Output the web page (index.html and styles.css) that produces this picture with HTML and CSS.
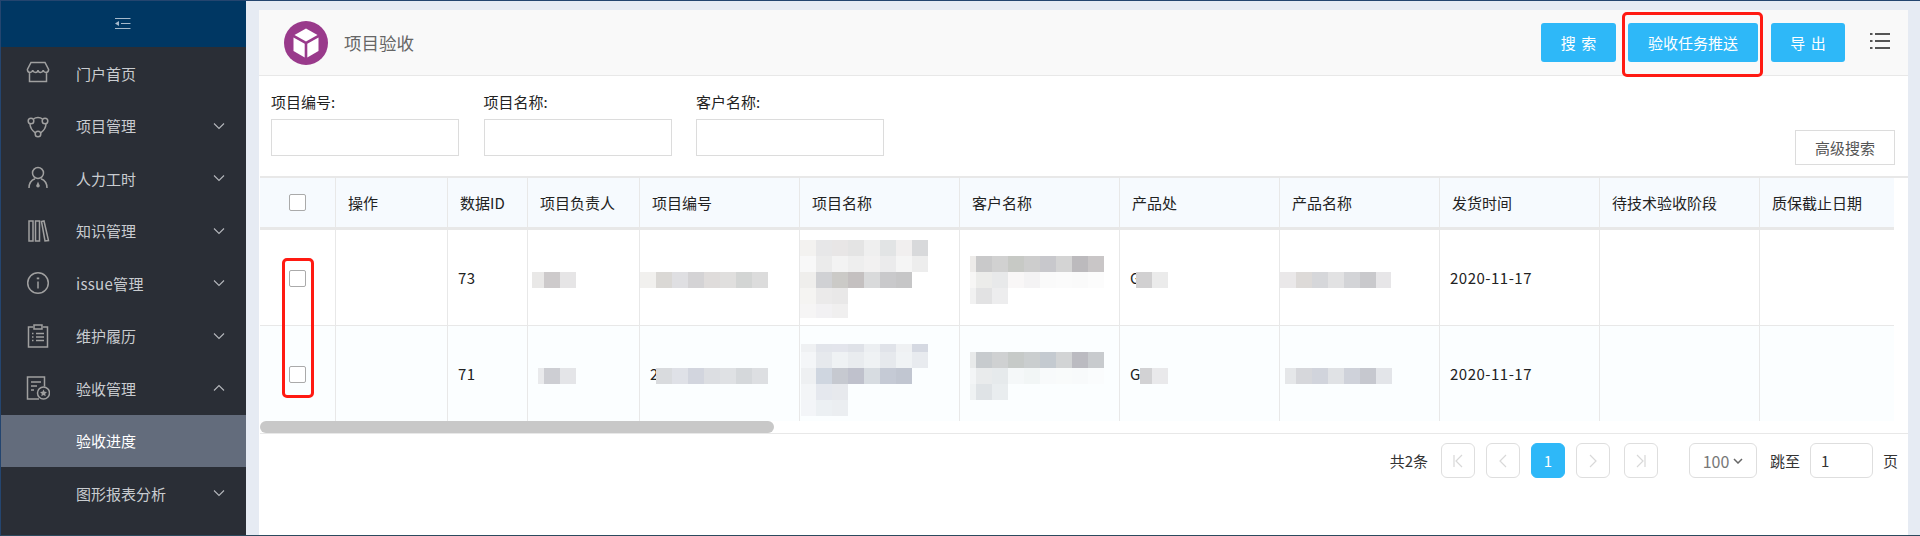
FILE: index.html
```html
<!DOCTYPE html>
<html>
<head>
    <meta charset="utf-8">
    <title>项目验收</title>
    <link rel="stylesheet" href="styles.css">
</head>
<body>
    <div class="app">
        <aside class="sidebar">
            <div class="sidebar-top">
                <svg width="16" height="12" viewBox="0 0 16 12"><path d="M0 .5h15.5M6 5.5h9.5M0 10.5h15.5" stroke="#a6b9cb" fill="none"/><path d="M0 5.500 4 3v5z" fill="#a6b9cb"/></svg>
            </div>
            <ul class="menu">
                <li class="menu-item">
                    <svg class="menu-icon" viewBox="0 0 24 24"><path d="M5 1.500h14l3.600 7c0 1.800-1.200 2.900-2.600 2.900s-2.600-1-2.800-2.400c-.2 1.400-1.300 2.400-2.700 2.400s-2.500-1-2.500-2.400c0 1.400-1.100 2.400-2.500 2.400S6.900 10.400 6.700 9C6.500 10.400 5.400 11.400 4 11.400s-2.600-1.100-2.600-2.900zM3.500 12v8.500h17V12"/></svg>
                    <span>门户首页</span>
                </li>
                <li class="menu-item">
                    <svg class="menu-icon" viewBox="0 0 24 24"><circle cx="5" cy="7" r="2.800"/><circle cx="19" cy="7" r="2.800"/><circle cx="12" cy="20" r="2.800"/><path d="M7.500 5C10 3 14 3 16.500 5M4 10c.2 3.500 2 6.500 5.300 8.800M20 10c-.2 3.500-2 6.500-5.300 8.800"/></svg>
                    <span>项目管理</span>
                    <svg class="chevron" viewBox="0 0 12 8"><path d="M1 1.500 6 6.500l5-5"/></svg>
                </li>
                <li class="menu-item">
                    <svg class="menu-icon" viewBox="0 0 24 24"><circle cx="12" cy="7" r="5.500"/><path d="M3 22c0-5 2.500-8 6-9.300M21 22c0-5-2.500-8-6-9.300"/><path class="solid" d="M12 15.500l1.800 4.200a1.800 1.800 0 0 1-3.600 0z"/></svg>
                    <span>人力工时</span>
                    <svg class="chevron" viewBox="0 0 12 8"><path d="M1 1.500 6 6.500l5-5"/></svg>
                </li>
                <li class="menu-item">
                    <svg class="menu-icon" viewBox="0 0 24 24"><path d="M3 2h4v20H3zM9.500 2h4v20h-4zM15.500 2.500 18 2l4.500 19.500-3.500.5z"/></svg>
                    <span>知识管理</span>
                    <svg class="chevron" viewBox="0 0 12 8"><path d="M1 1.500 6 6.500l5-5"/></svg>
                </li>
                <li class="menu-item">
                    <svg class="menu-icon" viewBox="0 0 24 24"><circle cx="12" cy="12" r="10.300"/><path d="M12 10.500v7"/><path class="thick" d="M12 6.500v1.800"/></svg>
                    <span class="latin">issue管理</span>
                    <svg class="chevron" viewBox="0 0 12 8"><path d="M1 1.500 6 6.500l5-5"/></svg>
                </li>
                <li class="menu-item">
                    <svg class="menu-icon" viewBox="0 0 24 24"><path d="M7 3H2.500v20h19V3H17"/><path d="M8 1h8v4H8z"/><path d="M6 9.500h1.500M10 9.500h8M6 13h1.500M10 13h8M6 16.500h1.500M10 16.500h8"/></svg>
                    <span>维护履历</span>
                    <svg class="chevron" viewBox="0 0 12 8"><path d="M1 1.500 6 6.500l5-5"/></svg>
                </li>
                <li class="menu-item">
                    <svg class="menu-icon" viewBox="0 0 24 24"><path d="M13 23H1.500V1h17v9.500"/><path d="M5 6h10M5 10h6M5 14h3"/><circle cx="17.500" cy="17" r="6"/><path class="solid" d="m17.500 13.500 1.100 2.300 2.400.3-1.800 1.700.5 2.400-2.200-1.200-2.200 1.200.5-2.400-1.800-1.700 2.400-.3z"/></svg>
                    <span>验收管理</span>
                    <svg class="chevron" viewBox="0 0 12 8"><path d="M1 6.500 6 1.500l5 5"/></svg>
                </li>
                <li class="menu-item menu-sub active"><span>验收进度</span></li>
                <li class="menu-item menu-sub">
                    <span>图形报表分析</span>
                    <svg class="chevron" viewBox="0 0 12 8"><path d="M1 1.500 6 6.500l5-5"/></svg>
                </li>
            </ul>
        </aside>

        <main class="content">
            <div class="card">
                <header class="card-head">
                    <svg class="logo" viewBox="0 0 44 44"><circle cx="22" cy="22" r="22" fill="#993a8b"/><path d="M22 7.500 33.500 14 22 20.500 10.500 14z" fill="#fff"/><path d="M9.500 16.500 20.700 22.800V36.500L9.500 30z" fill="#fff"/><path d="M34.500 16.500 23.300 22.800V36.500L34.500 30z" fill="#fff"/></svg>
                    <h1 class="title">项目验收</h1>
                    <div class="actions">
                        <button class="btn btn-search">搜 索</button>
                        <button class="btn btn-push">验收任务推送</button>
                        <button class="btn btn-export">导 出</button>
                        <svg class="list-icon" width="20" height="18" viewBox="0 0 20 18"><path d="M0 2h2.500M5 2h15M0 9h2.500M5 9h15M0 16h2.500M5 16h15" stroke="#555" stroke-width="2" fill="none"/></svg>
                    </div>
                </header>

                <form class="filters">
                    <div class="field"><label>项目编号:</label><input type="text"></div>
                    <div class="field"><label>项目名称:</label><input type="text"></div>
                    <div class="field"><label>客户名称:</label><input type="text"></div>
                    <button type="button" class="btn-advanced">高级搜索</button>
                </form>

                <div class="table-wrap">
                    <table class="grid">
                        <colgroup>
                            <col width="76"><col width="112"><col width="80"><col width="112"><col width="160"><col width="160"><col width="160"><col width="160"><col width="160"><col width="160"><col width="160"><col width="134">
                        </colgroup>
                        <thead>
                            <tr>
                                <th class="check"><input type="checkbox"></th>
                                <th>操作</th>
                                <th>数据ID</th>
                                <th>项目负责人</th>
                                <th>项目编号</th>
                                <th>项目名称</th>
                                <th>客户名称</th>
                                <th>产品处</th>
                                <th>产品名称</th>
                                <th>发货时间</th>
                                <th>待技术验收阶段</th>
                                <th class="last">质保截止日期</th>
                            </tr>
                        </thead>
                        <tbody>
                            <tr>
                                <td class="check"><input type="checkbox"></td>
                                <td></td><td>73</td><td></td><td></td><td></td><td></td><td>G</td><td></td><td>2020-11-17</td><td></td><td class="last"></td>
                            </tr>
                            <tr class="alt">
                                <td class="check"><input type="checkbox"></td>
                                <td></td><td>71</td><td></td><td>2</td><td></td><td></td><td>G</td><td></td><td>2020-11-17</td><td></td><td class="last"></td>
                            </tr>
                        </tbody>
                    </table>

                    <!-- pixelated redactions, drawn in page coordinates -->
                    <svg class="redact" width="1634" height="243" viewBox="260 178 1634 243" shape-rendering="crispEdges">
                        <!-- owner -->
                        <rect x="532" y="272" width="12" height="16" fill="#e9e8e7"/><rect x="544" y="272" width="16" height="16" fill="#cdcacb"/><rect x="560" y="272" width="16" height="16" fill="#e6e5e6"/>
                        <rect x="538" y="368" width="6" height="16" fill="#e9eaec"/><rect x="544" y="368" width="16" height="16" fill="#cdced3"/><rect x="560" y="368" width="16" height="16" fill="#e4e5e8"/>
                        <!-- project number -->
                        <rect x="640" y="267" width="16" height="36" fill="#fff"/>
                        <rect x="640" y="272" width="16" height="16" fill="#f1f0ee"/><rect x="656" y="272" width="16" height="16" fill="#dad8d5"/><rect x="672" y="272" width="16" height="16" fill="#dfdfe2"/><rect x="688" y="272" width="16" height="16" fill="#d4d3d5"/><rect x="704" y="272" width="16" height="16" fill="#dfdcdb"/><rect x="720" y="272" width="16" height="16" fill="#e0dfde"/><rect x="736" y="272" width="16" height="16" fill="#d3d5d4"/><rect x="752" y="272" width="16" height="16" fill="#dcdcdc"/>
                        <rect x="656" y="368" width="16" height="16" fill="#d9dbde"/><rect x="672" y="368" width="16" height="16" fill="#dfe1e7"/><rect x="688" y="368" width="16" height="16" fill="#d2d5de"/><rect x="704" y="368" width="16" height="16" fill="#dcdee2"/><rect x="720" y="368" width="16" height="16" fill="#dfe1e4"/><rect x="736" y="368" width="16" height="16" fill="#d5d8db"/><rect x="752" y="368" width="16" height="16" fill="#dddfe2"/>
                        <!-- project name, row 1 -->
                        <rect x="800" y="240" width="16" height="16" fill="#f3f2f0"/><rect x="816" y="240" width="16" height="16" fill="#e7e7e8"/><rect x="832" y="240" width="16" height="16" fill="#e8e6e6"/><rect x="848" y="240" width="16" height="16" fill="#e4e4e4"/><rect x="864" y="240" width="16" height="16" fill="#efefef"/><rect x="880" y="240" width="16" height="16" fill="#e2e4e5"/><rect x="896" y="240" width="16" height="16" fill="#f1efef"/><rect x="912" y="240" width="16" height="16" fill="#d8d9db"/>
                        <rect x="800" y="256" width="16" height="16" fill="#f8f8f8"/><rect x="816" y="256" width="16" height="16" fill="#ebebeb"/><rect x="832" y="256" width="16" height="16" fill="#f3f3f3"/><rect x="848" y="256" width="16" height="16" fill="#eeeeee"/><rect x="864" y="256" width="16" height="16" fill="#f2f1f1"/><rect x="880" y="256" width="16" height="16" fill="#ebebec"/><rect x="896" y="256" width="16" height="16" fill="#f5f5f5"/><rect x="912" y="256" width="16" height="16" fill="#ededed"/>
                        <rect x="800" y="272" width="16" height="16" fill="#efeeec"/><rect x="816" y="272" width="16" height="16" fill="#d0d1d4"/><rect x="832" y="272" width="16" height="16" fill="#cbcac7"/><rect x="848" y="272" width="16" height="16" fill="#c4c0c0"/><rect x="864" y="272" width="16" height="16" fill="#d9dadb"/><rect x="880" y="272" width="16" height="16" fill="#c9c9cb"/><rect x="896" y="272" width="16" height="16" fill="#c6c6c7"/>
                        <rect x="800" y="288" width="16" height="16" fill="#f5f4f2"/><rect x="816" y="288" width="16" height="16" fill="#ebeaea"/><rect x="832" y="288" width="16" height="16" fill="#e9e8e8"/>
                        <rect x="800" y="304" width="16" height="14" fill="#f6f5f5"/><rect x="816" y="304" width="16" height="14" fill="#f2f1f3"/><rect x="832" y="304" width="16" height="14" fill="#f0efef"/>
                        <!-- project name, row 2 -->
                        <rect x="801" y="344" width="15" height="8" fill="#eff1f3"/><rect x="816" y="344" width="16" height="8" fill="#e2e5eb"/><rect x="832" y="344" width="16" height="8" fill="#e3e5ec"/><rect x="848" y="344" width="16" height="8" fill="#dfe2e8"/><rect x="864" y="344" width="16" height="8" fill="#eceff2"/><rect x="880" y="344" width="16" height="8" fill="#e0e3e9"/><rect x="896" y="344" width="16" height="8" fill="#eff1f3"/><rect x="912" y="344" width="16" height="8" fill="#d5d9e2"/>
                        <rect x="801" y="352" width="15" height="16" fill="#f4f6f8"/><rect x="816" y="352" width="16" height="16" fill="#e6e9ed"/><rect x="832" y="352" width="16" height="16" fill="#eff2f4"/><rect x="848" y="352" width="16" height="16" fill="#e9ecef"/><rect x="864" y="352" width="16" height="16" fill="#eff2f4"/><rect x="880" y="352" width="16" height="16" fill="#e6e9ed"/><rect x="896" y="352" width="16" height="16" fill="#f0f3f5"/><rect x="912" y="352" width="16" height="16" fill="#e8ebef"/>
                        <rect x="801" y="368" width="15" height="16" fill="#eef0f2"/><rect x="816" y="368" width="16" height="16" fill="#cfd6e0"/><rect x="832" y="368" width="16" height="16" fill="#c6c9d0"/><rect x="848" y="368" width="16" height="16" fill="#bfc1cc"/><rect x="864" y="368" width="16" height="16" fill="#d7dce1"/><rect x="880" y="368" width="16" height="16" fill="#c5cad5"/><rect x="896" y="368" width="16" height="16" fill="#c1c6d1"/>
                        <rect x="801" y="384" width="15" height="16" fill="#f3f5f7"/><rect x="816" y="384" width="16" height="16" fill="#e5e8ee"/><rect x="832" y="384" width="16" height="16" fill="#e7e9ed"/>
                        <rect x="801" y="400" width="15" height="16" fill="#f3f5f8"/><rect x="816" y="400" width="16" height="16" fill="#ecf0f3"/><rect x="832" y="400" width="16" height="16" fill="#ebeef1"/>
                        <!-- customer -->
                        <rect x="970" y="256" width="6" height="16" fill="#edebe9"/><rect x="976" y="256" width="16" height="16" fill="#c9c9ca"/><rect x="992" y="256" width="16" height="16" fill="#d1d1d1"/><rect x="1008" y="256" width="16" height="16" fill="#c7c9c5"/><rect x="1024" y="256" width="16" height="16" fill="#cdcdcd"/><rect x="1040" y="256" width="16" height="16" fill="#c8c8cc"/><rect x="1056" y="256" width="16" height="16" fill="#d4d4d4"/><rect x="1072" y="256" width="16" height="16" fill="#bcbabd"/><rect x="1088" y="256" width="16" height="16" fill="#c9c6c7"/>
                        <rect x="970" y="272" width="6" height="16" fill="#f7f6f5"/><rect x="976" y="272" width="16" height="16" fill="#ececea"/><rect x="992" y="272" width="16" height="16" fill="#e8e9ea"/><rect x="1008" y="272" width="16" height="16" fill="#f9f7f7"/><rect x="1024" y="272" width="16" height="16" fill="#f4f3f4"/><rect x="1040" y="272" width="16" height="16" fill="#fafafa"/><rect x="1056" y="272" width="16" height="16" fill="#fbfbfb"/><rect x="1072" y="272" width="16" height="16" fill="#fafafa"/><rect x="1088" y="272" width="16" height="16" fill="#fcfcfc"/>
                        <rect x="970" y="288" width="6" height="16" fill="#f1f1f1"/><rect x="976" y="288" width="16" height="16" fill="#e2e2e3"/><rect x="992" y="288" width="16" height="16" fill="#ededee"/>
                        <rect x="970" y="352" width="6" height="16" fill="#e8eaea"/><rect x="976" y="352" width="16" height="16" fill="#c7cbce"/><rect x="992" y="352" width="16" height="16" fill="#cfd1d2"/><rect x="1008" y="352" width="16" height="16" fill="#c6cac8"/><rect x="1024" y="352" width="16" height="16" fill="#cacecf"/><rect x="1040" y="352" width="16" height="16" fill="#c4cad0"/><rect x="1056" y="352" width="16" height="16" fill="#d2d4d5"/><rect x="1072" y="352" width="16" height="16" fill="#bbbbc1"/><rect x="1088" y="352" width="16" height="16" fill="#c8cbce"/>
                        <rect x="970" y="368" width="6" height="16" fill="#f3f5f6"/><rect x="976" y="368" width="16" height="16" fill="#e9ebec"/><rect x="992" y="368" width="16" height="16" fill="#e6eaec"/><rect x="1008" y="368" width="16" height="16" fill="#f5f8f9"/><rect x="1024" y="368" width="16" height="16" fill="#f2f6f6"/><rect x="1040" y="368" width="16" height="16" fill="#f8fafb"/><rect x="1056" y="368" width="16" height="16" fill="#f9fbfb"/><rect x="1072" y="368" width="16" height="16" fill="#f8fafb"/><rect x="1088" y="368" width="16" height="16" fill="#fafcfd"/>
                        <rect x="970" y="384" width="6" height="16" fill="#eff2f3"/><rect x="976" y="384" width="16" height="16" fill="#dfe3e6"/><rect x="992" y="384" width="16" height="16" fill="#e9edef"/>
                        <!-- product dept -->
                        <rect x="1136" y="272" width="16" height="16" fill="#d1d0d1"/><rect x="1152" y="272" width="16" height="16" fill="#ebebeb"/>
                        <rect x="1140" y="368" width="12" height="16" fill="#d2d2d4"/><rect x="1152" y="368" width="16" height="16" fill="#e9e9eb"/>
                        <!-- product name -->
                        <rect x="1280" y="272" width="16" height="16" fill="#eae8e9"/><rect x="1296" y="272" width="16" height="16" fill="#dddad8"/><rect x="1312" y="272" width="16" height="16" fill="#d6d7da"/><rect x="1328" y="272" width="16" height="16" fill="#e2e2e3"/><rect x="1344" y="272" width="16" height="16" fill="#d3d4d7"/><rect x="1360" y="272" width="16" height="16" fill="#c9c9cc"/><rect x="1376" y="272" width="15" height="16" fill="#e7e6e8"/>
                        <rect x="1285" y="368" width="11" height="16" fill="#e5e7e9"/><rect x="1296" y="368" width="16" height="16" fill="#d6d7db"/><rect x="1312" y="368" width="16" height="16" fill="#d1d4dc"/><rect x="1328" y="368" width="16" height="16" fill="#e0e2e5"/><rect x="1344" y="368" width="16" height="16" fill="#cfd2da"/><rect x="1360" y="368" width="16" height="16" fill="#c6c8cf"/><rect x="1376" y="368" width="16" height="16" fill="#e3e5e9"/>
                    </svg>
                </div>

                <div class="scroll-track"><div class="scroll-thumb"></div></div>

                <nav class="pager">
                    <span class="pager-total">共2条</span>
                    <a class="page-btn"><svg width="12" height="14" viewBox="0 0 12 14"><path d="M2 1v12M10 1 4 7l6 6"/></svg></a>
                    <a class="page-btn"><svg width="12" height="14" viewBox="0 0 12 14"><path d="M9 1 3 7l6 6"/></svg></a>
                    <a class="page-btn current">1</a>
                    <a class="page-btn"><svg width="12" height="14" viewBox="0 0 12 14"><path d="m3 1 6 6-6 6"/></svg></a>
                    <a class="page-btn"><svg width="12" height="14" viewBox="0 0 12 14"><path d="M10 1v12M2 1l6 6-6 6"/></svg></a>
                    <div class="page-size">100 <svg width="10" height="6" viewBox="0 0 10 6"><path d="m1 1 4 4 4-4"/></svg></div>
                    <span class="jump-label">跳至</span>
                    <input class="jump-input" type="text" value="1">
                    <span class="jump-unit">页</span>
                </nav>
            </div>
        </main>
    </div>

    <!-- red marks someone drew on the screenshot -->
    <div class="mark mark-button"></div>
    <div class="mark mark-checks"></div>
</body>
</html>
```

FILE: styles.css
```css
* {
    box-sizing: border-box;
}
html, body {
    margin: 0;
    height: 536px;
    overflow: hidden;
}
body {
    position: relative;
    font-family: "Noto Sans CJK SC", "Liberation Sans", sans-serif;
    font-size: 15px;
    color: #333;
    background: #e6ebf3;
    border-top: 1px solid #24456f;
    border-left: 1px solid #24456f;
    border-bottom: 1px solid #2c4a5e;
}
.app {
    display: flex;
    height: 534px;
}

/* sidebar */
.sidebar {
    width: 245px;
    flex: none;
    background: #2a2e36;
}
.sidebar-top {
    height: 46px;
    background: #003763;
    display: flex;
    align-items: center;
    justify-content: center;
    padding-right: 2px;
}
.menu {
    list-style: none;
    margin: 0;
    padding: 0;
}
.menu-item {
    height: 52.5px;
    display: flex;
    align-items: center;
    padding-left: 25px;
    color: #c9ccd0;
}
.menu-icon {
    width: 24px;
    height: 24px;
    margin-right: 26px;
    fill: none;
    stroke: #a0a0a0;
    stroke-width: 1.5;
}
.menu-icon .solid {
    fill: #a0a0a0;
    stroke: none;
}
.menu-icon .thick {
    stroke-width: 2.5;
}
.menu-sub {
    padding-left: 75px;
}
.latin {
    letter-spacing: .3px;
}
.active {
    background: #636c7c;
    color: #fff;
}
.chevron {
    width: 12px;
    height: 8px;
    margin-left: auto;
    margin-right: 21px;
    fill: none;
    stroke: #b5b8bc;
    stroke-width: 1.1;
}

/* main */
.content {
    flex: 1;
    padding: 9px 12px 0 13px;
    min-width: 0;
}
.card {
    height: 100%;
    background: #fff;
}
.card-head {
    height: 66px;
    display: flex;
    align-items: center;
    padding-left: 25px;
    padding-right: 18px;
    background: #f9f9f9;
    border-bottom: 1px solid #e8e8e8;
}
.logo {
    width: 44px;
    height: 44px;
}
.title {
    margin: 0 0 0 16px;
    font-size: 17.5px;
    font-weight: 400;
    color: #666;
}
.actions {
    margin-left: auto;
    display: flex;
    align-items: center;
}
.btn {
    height: 39px;
    border: 0;
    border-radius: 3px;
    background: #2eb8f8;
    color: #fff;
    font: inherit;
    padding: 0;
    word-spacing: 2px;
}
.btn-search {
    width: 75px;
}
.btn-push {
    width: 130px;
    margin-left: 12px;
}
.btn-export {
    width: 74px;
    margin-left: 13px;
}
.list-icon {
    margin-left: 25px;
    margin-top: -3px;
}

/* filters */
.filters {
    height: 100px;
    display: flex;
    gap: 24.5px;
    padding: 16px 13px 11px 12px;
}
.field {
    width: 188px;
    display: flex;
    flex-direction: column;
    gap: 7px;
}
.field label {
    line-height: 20px;
    color: #222;
    word-spacing: 1px;
}
.field input {
    height: 37px;
    border: 1px solid #dcdcdc;
    background: #fff;
    outline: none;
}
.btn-advanced {
    width: 100px;
    height: 35px;
    margin-left: auto;
    align-self: flex-end;
    border: 1px solid #dcdcdc;
    background: #fff;
    font: inherit;
    color: #555;
}

/* table */
.table-wrap {
    position: relative;
    margin-left: 1px;
    border-top: 2px solid #e8e8e8;
}
.grid {
    width: 1634px;
    table-layout: fixed;
    border-collapse: separate;
    border-spacing: 0;
}
.grid th {
    height: 52px;
    padding: 0 0 0 12px;
    text-align: left;
    font-weight: 400;
    color: #222;
    background: #f6fafe;
    border-right: 1px solid #e8e8e8;
    border-bottom: 3px solid #e8e8e8;
}
.grid td {
    height: 96px;
    padding: 0 0 0 10px;
    color: #222;
    letter-spacing: .5px;
    background: #fff;
    border-right: 1px solid #e8e8e8;
    border-bottom: 1px solid #e8e8e8;
}
.grid .alt td {
    height: 95px;
    background: #fbfeff;
    border-bottom: 0;
}
.grid .check {
    padding: 0;
    text-align: center;
}
.grid td.check {
    padding-top: 2px;
}
.grid .last {
    border-right: 0;
}
.check input {
    appearance: none;
    display: block;
    width: 17px;
    height: 17px;
    margin: 0 auto;
    background: #fff;
    border: 1px solid #aaa;
    border-radius: 2px;
}
.redact {
    position: absolute;
    left: 0;
    top: 0;
    pointer-events: none;
}
.scroll-track {
    height: 13px;
    margin-left: 1px;
    border-bottom: 1px solid #e8e8e8;
}
.scroll-thumb {
    width: 514px;
    height: 12px;
    border-radius: 6px;
    background: #c8c8c8;
}

/* pager */
.pager {
    display: flex;
    align-items: center;
    justify-content: flex-end;
    padding: 9px 10px 0 0;
}
.pager-total {
    margin-right: 13px;
}
.page-btn {
    width: 34px;
    height: 35px;
    display: flex;
    align-items: center;
    justify-content: center;
    margin-right: 11px;
    border: 1px solid #dedede;
    border-radius: 6px;
}
.page-btn svg {
    fill: none;
    stroke: #d8d8d8;
    stroke-width: 1.2;
}
.page-btn.current {
    border-color: #2eb8f8;
    background: #2eb8f8;
    color: #fff;
}
.page-btn:nth-of-type(4) {
    margin-right: 14px;
}
.page-size {
    width: 68px;
    height: 35px;
    margin-left: 20px;
    display: flex;
    align-items: center;
    justify-content: center;
    gap: 4px;
    border: 1px solid #dedede;
    border-radius: 6px;
    color: #777;
    font-size: 16px;
}
.page-size svg {
    fill: none;
    stroke: #666;
    stroke-width: 1.5;
}
.jump-label {
    margin-left: 13px;
}
.jump-input {
    width: 63px;
    height: 35px;
    margin-left: 10px;
    padding: 0 10px;
    border: 1px solid #dedede;
    border-radius: 6px;
    font: inherit;
    color: #333;
    outline: none;
}
.jump-unit {
    margin-left: 10px;
}

/* annotations */
.mark {
    position: absolute;
    border: 3px solid #ff1a12;
    border-radius: 5px;
    pointer-events: none;
}
.mark-button {
    left: 1621px;
    top: 11px;
    width: 141px;
    height: 65px;
}
.mark-checks {
    left: 281px;
    top: 257px;
    width: 32px;
    height: 140px;
}
```
